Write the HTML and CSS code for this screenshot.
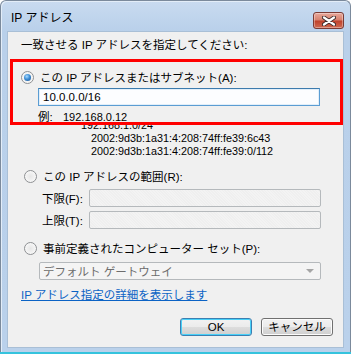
FILE: index.html
```html
<!DOCTYPE html>
<html lang="ja">
<head>
  <meta charset="UTF-8" />
  <title>IP アドレス</title>
  <link rel="stylesheet" href="styles.css">
</head>
<body>

<div class="window">
  <div class="titlebar">
    <span class="title">IP アドレス</span>
    <button class="close" aria-label="閉じる">
      <svg width="14" height="10" viewBox="0 0 14 10">
        <path d="M2 1.5 L12 8.5 M12 1.5 L2 8.5" stroke="#3a2a2a" stroke-width="4" stroke-linecap="round"/>
        <path d="M2 1.5 L12 8.5 M12 1.5 L2 8.5" stroke="#fff" stroke-width="2.2" stroke-linecap="round"/>
      </svg>
    </button>
  </div>

  <div class="client">
    <p class="prompt">一致させる IP アドレスを指定してください:</p>

    <div class="highlight">
      <label class="option">
        <span class="radio checked"></span>
        <span>この IP アドレスまたはサブネット(A):</span>
      </label>
      <div class="textbox active">10.0.0.0/16</div>
      <div class="example"><span class="ex-label">例:</span>192.168.0.12</div>
    </div>

    <div class="examples">
      <div class="ex-first">192.168.1.0/24</div>
      <div>2002:9d3b:1a31:4:208:74ff:fe39:6c43</div>
      <div>2002:9d3b:1a31:4:208:74ff:fe39:0/112</div>
    </div>

    <label class="option">
      <span class="radio"></span>
      <span>この IP アドレスの範囲(R):</span>
    </label>
    <div class="range-row">
      <span class="range-label">下限(F):</span>
      <div class="textbox disabled"></div>
    </div>
    <div class="range-row">
      <span class="range-label">上限(T):</span>
      <div class="textbox disabled"></div>
    </div>

    <label class="option">
      <span class="radio"></span>
      <span>事前定義されたコンピューター セット(P):</span>
    </label>
    <div class="select disabled">
      <span>デフォルト ゲートウェイ</span>
      <span class="arrow"></span>
    </div>

    <a class="link" href="#">IP アドレス指定の詳細を表示します</a>

    <div class="buttons">
      <button class="btn default">OK</button>
      <button class="btn">キャンセル</button>
    </div>
  </div>
</div>

</body>
</html>
```

FILE: styles.css
```css
body {
  margin: 0;
  background: #fff;
  font-family: "Liberation Sans", "Noto Sans CJK JP", sans-serif;
  font-size: 11px;
  color: #000;
}
.window {
  width: 351px;
  border: 1px solid #7b8a9c;
  border-bottom: none;
  border-radius: 6px 6px 0 0;
  background: linear-gradient(to bottom, #c9dbf0 0, #b9d0ea 30px, #bad1eb 100%);
  padding: 0 6px;
  box-sizing: border-box;
  box-shadow: inset 1px 1px 0 #e3edf8;
}
.window::after {
  content: "";
  display: block;
  height: 2px;
  margin: 4px -7px 0;
  background: #35c3dd;
}
.titlebar {
  height: 30px;
  display: flex;
  align-items: center;
  justify-content: space-between;
}
.title {
  font-size: 12px;
  padding-left: 4px;
}
.close {
  width: 31px;
  height: 17px;
  margin-top: 11px;
  align-self: flex-start;
  padding: 0;
  border: 1px solid #7a3b35;
  border-radius: 3px;
  background: linear-gradient(to bottom, #e8a89b 0, #d7826f 45%, #c0432d 55%, #cf6a52 100%);
  box-shadow: inset 0 0 0 1px rgba(255,255,255,0.35);
  display: flex;
  align-items: center;
  justify-content: center;
}
.client {
  height: 317px;
  background: #f0f0f0;
  border: 1px solid #a9bfd6;
  box-sizing: border-box;
  padding: 0 0 0 2px;
}
.prompt {
  margin: 5px 0 0 11px;
  height: 16px;
  line-height: 16px;
  font-size: 11.5px;
}
.highlight {
  position: relative;
  z-index: 1;
  margin-top: 6px;
  width: 333px;
  height: 66px;
  box-sizing: border-box;
  border: 3px solid #f00;
  background: #f0f0f0;
  padding: 8px 0 0 8px;
}
.option {
  display: flex;
  align-items: center;
  gap: 6px;
  height: 14px;
  font-size: 11.5px;
}
.radio {
  width: 13px;
  height: 13px;
  border-radius: 50%;
  box-sizing: border-box;
  border: 1px solid #8e9093;
  background: radial-gradient(circle at 50% 50%, #e6e6e6 0, #f4f4f4 60%, #fff 100%);
  position: relative;
  flex: none;
}
.radio.checked::after {
  content: "";
  position: absolute;
  left: 2px;
  top: 2px;
  width: 7px;
  height: 7px;
  border-radius: 50%;
  background: radial-gradient(circle at 40% 35%, #a8dbff 0, #3d8ed6 45%, #1b4f8c 100%);
}
.textbox {
  box-sizing: border-box;
  height: 18px;
  border: 1px solid #abadb3;
  background: #fff;
  padding: 0 4px;
  line-height: 16px;
  font-size: 11.5px;
}
.highlight .textbox {
  margin: 4px 0 0 17px;
  width: 282px;
}
.textbox.active {
  border-color: #5b9dd3;
  border-top-color: #3d7bad;
  background: #fcfdff;
  box-shadow: inset 0 0 0 1px #e2effa;
}
.textbox.disabled {
  width: 232px;
  height: 18px;
  border-color: #b5b9bc;
  background: repeating-linear-gradient(45deg, #efefef 0 1px, #f3f3f3 1px 2px);
  border-radius: 2px;
}
.example {
  margin: 4px 0 0 17px;
  line-height: 14px;
}
.ex-label {
  display: inline-block;
  width: 25px;
  font-size: 11.5px;
}
.examples {
  margin: -6px 0 0 81px;
  line-height: 13px;
  font-size: 10.8px;
}
.examples .ex-first {
  margin-left: -10px;
}
.examples + .option {
  margin: 11px 0 0 14px;
}
.range-row {
  display: flex;
  align-items: center;
  margin: 6px 0 0 32px;
  height: 18px;
}
.range-row + .range-row {
  margin-top: 4px;
}
.range-label {
  flex: 0 0 47px;
  font-size: 11.5px;
}
.range-row + .option {
  margin: 12px 0 0 14px;
}
.select {
  margin: 7px 0 0 29px;
  width: 282px;
  height: 18px;
  box-sizing: border-box;
  border: 1px solid #b5b9bc;
  border-radius: 2px;
  background: #f4f4f4;
  color: #6d6d6d;
  display: flex;
  align-items: center;
  justify-content: space-between;
  padding: 0 6px 0 3px;
  font-size: 11.5px;
}
.arrow {
  width: 0;
  height: 0;
  border-left: 4px solid transparent;
  border-right: 4px solid transparent;
  border-top: 4px solid #a5a5a5;
}
.link {
  display: inline-block;
  margin: 8px 0 0 11px;
  color: #0b63c5;
  text-decoration: underline;
  font-size: 11.5px;
  line-height: 14px;
}
.buttons {
  display: flex;
  justify-content: flex-end;
  gap: 9px;
  margin: 16px 10px 0 0;
}
.btn {
  width: 72px;
  height: 18px;
  padding: 0;
  border: 1px solid #707070;
  border-radius: 3px;
  background: linear-gradient(to bottom, #f2f2f2 0, #ebebeb 50%, #dddddd 51%, #cfcfcf 100%);
  box-shadow: inset 0 0 0 1px #fcfcfc;
  font-family: "Liberation Sans", "Noto Sans CJK JP", sans-serif;
  font-size: 11.5px;
  line-height: 16px;
  color: #000;
}
.btn.default {
  border-color: #3c7fb1;
  box-shadow: inset 0 0 0 1px #48d0f8;
}
```
